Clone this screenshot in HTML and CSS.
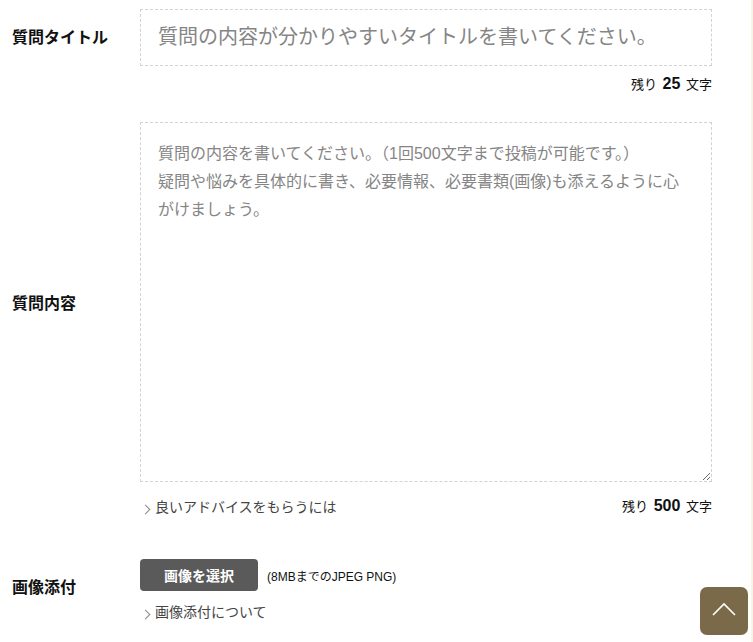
FILE: index.html
```html
<!DOCTYPE html>
<html lang="ja">
<head>
  <meta charset="UTF-8">
  <meta name="viewport" content="width=device-width, initial-scale=1.0">
  <title>質問する</title>
  <link rel="stylesheet" href="styles.css">
</head>
<body>
  <div class="page">
    <form class="question-form">
      <div class="form-row">
        <label for="title" class="row-label">質問タイトル</label>
        <input type="text" id="title" name="title" class="title-input" placeholder="質問の内容が分かりやすいタイトルを書いてください。">
        <div class="row-extra extra-right">
          <p class="counter">残り <strong>25</strong> 文字</p>
        </div>
      </div>

      <div class="form-row row-body">
        <label for="body" class="row-label">質問内容</label>
        <textarea id="body" name="body" class="body-input" placeholder="質問の内容を書いてください。（1回500文字まで投稿が可能です。）&#10;疑問や悩みを具体的に書き、必要情報、必要書類(画像)も添えるように心&#10;がけましょう。"></textarea>
        <div class="row-extra extra-split">
          <a href="#" class="more-link">良いアドバイスをもらうには</a>
          <p class="counter">残り <strong>500</strong> 文字</p>
        </div>
      </div>

      <div class="form-row row-image">
        <label class="row-label label-span">画像添付</label>
        <div class="upload">
          <button type="button" class="upload-btn">画像を選択</button>
          <span class="upload-note">(8MBまでのJPEG PNG)</span>
        </div>
        <div class="row-extra">
          <a href="#" class="more-link">画像添付について</a>
        </div>
      </div>
    </form>
    <div class="divider"></div>
  </div>

  <a href="#" class="to-top" aria-label="ページの先頭へ">
    <svg width="24" height="14" viewBox="0 0 24 14"><path d="M1 13 L12 2 L23 13" fill="none" stroke="#fff" stroke-width="1.6"/></svg>
  </a>
</body>
</html>
```

FILE: styles.css
```css
html {
  background: #f8f3e2;
}

body {
  margin: 0;
  font-family: "Liberation Sans", "Noto Sans CJK JP", sans-serif;
  color: #222;
}

.page {
  width: 751px;
  height: 642px;
  background: #fff;
  padding: 9px 0 0 12px;
  box-sizing: border-box;
  overflow: hidden;
}

.question-form {
  width: 700px;
}

.form-row {
  display: grid;
  grid-template-columns: 128px 572px;
}

.row-body {
  margin-top: 27px;
}

.row-image {
  margin-top: 42px;
}

.row-label {
  grid-column: 1;
  grid-row: 1;
  align-self: center;
  font-size: 16px;
  line-height: 18px;
  font-weight: bold;
  color: #111;
}

.row-body .row-label {
  padding-top: 4px;
}

.row-label.label-span {
  grid-row: 1 / 3;
  padding-bottom: 5px;
}

.title-input,
.body-input,
.upload {
  grid-column: 2;
  grid-row: 1;
}

.row-extra {
  grid-column: 2;
  grid-row: 2;
}

.title-input {
  height: 57px;
  box-sizing: border-box;
  border: 1px dashed #d2d2d2;
  padding: 0 17px;
  font-family: inherit;
  font-size: 20px;
  color: #333;
  outline: none;
}

.body-input {
  height: 360px;
  box-sizing: border-box;
  border: 1px dashed #d2d2d2;
  padding: 17px 17px;
  font-family: inherit;
  font-size: 16px;
  line-height: 28px;
  color: #333;
  outline: none;
}

.title-input::placeholder,
.body-input::placeholder {
  color: #858585;
}

.extra-right {
  display: flex;
  justify-content: flex-end;
  margin-top: 8px;
}

.extra-split {
  display: flex;
  justify-content: space-between;
  align-items: center;
  margin-top: 14px;
}

.counter {
  margin: 0;
  font-size: 13px;
  line-height: 20px;
  color: #111;
}

.counter strong {
  font-size: 16px;
  margin: 0 2px;
}

.more-link {
  display: inline-flex;
  align-items: center;
  font-size: 14px;
  line-height: 20px;
  color: #444;
  text-decoration: none;
  padding-left: 2px;
}

.more-link::before {
  content: '';
  width: 6px;
  height: 6px;
  border-top: 1px solid #888;
  border-right: 1px solid #888;
  transform: rotate(45deg);
  margin: 5px 6px 0 0;
}

.row-image .row-extra {
  margin-top: 11px;
}

.upload {
  display: flex;
  align-items: center;
}

.upload-btn {
  width: 118px;
  height: 32px;
  border: none;
  border-radius: 4px;
  background: #5a5a5a;
  color: #fff;
  font-family: inherit;
  font-size: 14px;
  font-weight: bold;
  cursor: pointer;
}

.upload-note {
  margin-left: 9px;
  font-size: 12px;
  color: #111;
}

.divider {
  width: 486px;
  margin: 20px 0 0 -4px;
  border-top: 1px solid #d6d6d6;
}

.to-top {
  position: fixed;
  right: 5px;
  bottom: 7px;
  width: 48px;
  height: 48px;
  border-radius: 7px;
  background: #7b6a4a;
  display: flex;
  align-items: center;
  justify-content: center;
}

.to-top svg {
  margin-bottom: 4px;
}
```
